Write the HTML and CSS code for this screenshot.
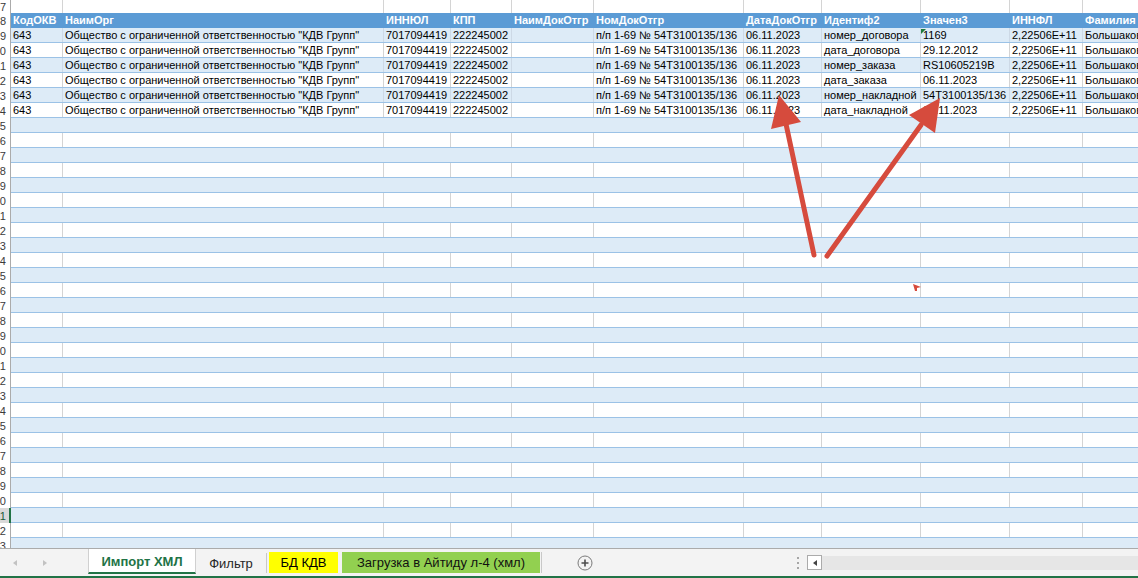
FILE: index.html
```html
<!DOCTYPE html>
<html lang="ru">
<head>
<meta charset="utf-8">
<title>Импорт ХМЛ</title>
<link rel="stylesheet" href="styles.css">
</head>
<body>
<div class="app">
  <div class="sheet">
    <div class="row top"><div class="rh">7</div><div class="cells"><i></i><i></i><i></i><i></i><i></i><i></i><i></i><i></i><i></i><i></i><i></i></div></div>
    <div class="row"><div class="rh">8</div><div class="cells hdr"><span>КодОКВ</span><span>НаимОрг</span><span>ИННЮЛ</span><span>КПП</span><span>НаимДокОтгр</span><span>НомДокОтгр</span><span>ДатаДокОтгр</span><span>Идентиф2</span><span>Значен3</span><span>ИННФЛ</span><span>Фамилия</span></div></div>
    <div class="row"><div class="rh">9</div><div class="cells data band"><span>643</span><span>Общество с ограниченной ответственностью "КДВ Групп"</span><span>7017094419</span><span>222245002</span><span></span><span>п/п 1-69 № 54Т3100135/136</span><span>06.11.2023</span><span>номер_договора</span><span class="flag">1169</span><span>2,22506E+11</span><span>Большаков</span></div></div>
    <div class="row"><div class="rh">10</div><div class="cells data"><span>643</span><span>Общество с ограниченной ответственностью "КДВ Групп"</span><span>7017094419</span><span>222245002</span><span></span><span>п/п 1-69 № 54Т3100135/136</span><span>06.11.2023</span><span>дата_договора</span><span>29.12.2012</span><span>2,22506E+11</span><span>Большаков</span></div></div>
    <div class="row"><div class="rh">11</div><div class="cells data band"><span>643</span><span>Общество с ограниченной ответственностью "КДВ Групп"</span><span>7017094419</span><span>222245002</span><span></span><span>п/п 1-69 № 54Т3100135/136</span><span>06.11.2023</span><span>номер_заказа</span><span>RS10605219B</span><span>2,22506E+11</span><span>Большаков</span></div></div>
    <div class="row"><div class="rh">12</div><div class="cells data"><span>643</span><span>Общество с ограниченной ответственностью "КДВ Групп"</span><span>7017094419</span><span>222245002</span><span></span><span>п/п 1-69 № 54Т3100135/136</span><span>06.11.2023</span><span>дата_заказа</span><span>06.11.2023</span><span>2,22506E+11</span><span>Большаков</span></div></div>
    <div class="row"><div class="rh">13</div><div class="cells data band"><span>643</span><span>Общество с ограниченной ответственностью "КДВ Групп"</span><span>7017094419</span><span>222245002</span><span></span><span>п/п 1-69 № 54Т3100135/136</span><span>06.11.2023</span><span>номер_накладной</span><span>54Т3100135/136</span><span>2,22506E+11</span><span>Большаков</span></div></div>
    <div class="row"><div class="rh">14</div><div class="cells data"><span>643</span><span>Общество с ограниченной ответственностью "КДВ Групп"</span><span>7017094419</span><span>222245002</span><span></span><span>п/п 1-69 № 54Т3100135/136</span><span>06.11.2023</span><span>дата_накладной</span><span>06.11.2023</span><span>2,22506E+11</span><span>Большаков</span></div></div>
    <div class="row"><div class="rh">15</div><div class="cells blank band"></div></div>
    <div class="row"><div class="rh">16</div><div class="cells"><i></i><i></i><i></i><i></i><i></i><i></i><i></i><i></i><i></i><i></i><i></i></div></div>
    <div class="row"><div class="rh">17</div><div class="cells blank band"></div></div>
    <div class="row"><div class="rh">18</div><div class="cells"><i></i><i></i><i></i><i></i><i></i><i></i><i></i><i></i><i></i><i></i><i></i></div></div>
    <div class="row"><div class="rh">19</div><div class="cells blank band"></div></div>
    <div class="row"><div class="rh">20</div><div class="cells"><i></i><i></i><i></i><i></i><i></i><i></i><i></i><i></i><i></i><i></i><i></i></div></div>
    <div class="row"><div class="rh">21</div><div class="cells blank band"></div></div>
    <div class="row"><div class="rh">22</div><div class="cells"><i></i><i></i><i></i><i></i><i></i><i></i><i></i><i></i><i></i><i></i><i></i></div></div>
    <div class="row"><div class="rh">23</div><div class="cells blank band"></div></div>
    <div class="row"><div class="rh">24</div><div class="cells"><i></i><i></i><i></i><i></i><i></i><i></i><i></i><i></i><i></i><i></i><i></i></div></div>
    <div class="row"><div class="rh">25</div><div class="cells blank band"></div></div>
    <div class="row"><div class="rh">26</div><div class="cells"><i></i><i></i><i></i><i></i><i></i><i></i><i></i><i></i><i></i><i></i><i></i></div></div>
    <div class="row"><div class="rh">27</div><div class="cells blank band"></div></div>
    <div class="row"><div class="rh">28</div><div class="cells"><i></i><i></i><i></i><i></i><i></i><i></i><i></i><i></i><i></i><i></i><i></i></div></div>
    <div class="row"><div class="rh">29</div><div class="cells blank band"></div></div>
    <div class="row"><div class="rh">30</div><div class="cells"><i></i><i></i><i></i><i></i><i></i><i></i><i></i><i></i><i></i><i></i><i></i></div></div>
    <div class="row"><div class="rh">31</div><div class="cells blank band"></div></div>
    <div class="row"><div class="rh">32</div><div class="cells"><i></i><i></i><i></i><i></i><i></i><i></i><i></i><i></i><i></i><i></i><i></i></div></div>
    <div class="row"><div class="rh">33</div><div class="cells blank band"></div></div>
    <div class="row"><div class="rh">34</div><div class="cells"><i></i><i></i><i></i><i></i><i></i><i></i><i></i><i></i><i></i><i></i><i></i></div></div>
    <div class="row"><div class="rh">35</div><div class="cells blank band"></div></div>
    <div class="row"><div class="rh">36</div><div class="cells"><i></i><i></i><i></i><i></i><i></i><i></i><i></i><i></i><i></i><i></i><i></i></div></div>
    <div class="row"><div class="rh">37</div><div class="cells blank band"></div></div>
    <div class="row"><div class="rh">38</div><div class="cells"><i></i><i></i><i></i><i></i><i></i><i></i><i></i><i></i><i></i><i></i><i></i></div></div>
    <div class="row"><div class="rh">39</div><div class="cells blank band"></div></div>
    <div class="row"><div class="rh">40</div><div class="cells"><i></i><i></i><i></i><i></i><i></i><i></i><i></i><i></i><i></i><i></i><i></i></div></div>
    <div class="row"><div class="rh sel">41</div><div class="cells blank band"></div></div>
    <div class="row"><div class="rh">42</div><div class="cells"><i></i><i></i><i></i><i></i><i></i><i></i><i></i><i></i><i></i><i></i><i></i></div></div>
    <div class="row"><div class="rh">43</div><div class="cells blank band"></div></div>
  </div>

  <div class="tabbar">
    <div class="nav">
      <span class="tri left"></span>
      <span class="tri right"></span>
    </div>
    <div class="tabs">
      <div class="tab active">Импорт ХМЛ</div>
      <div class="tab plain">Фильтр</div>
      <div class="tab yellow">БД КДВ</div>
      <div class="tab green">Загрузка в Айтиду л-4 (хмл)</div>
    </div>
    <div class="add">
      <svg width="16" height="16" viewBox="0 0 16 16"><circle cx="8" cy="8" r="7" fill="none" stroke="#7a7a7a" stroke-width="1"/><path d="M8 4.5v7M4.5 8h7" stroke="#4d4d4d" stroke-width="1.6"/></svg>
    </div>
    <div class="dots"><b></b><b></b><b></b></div>
    <div class="scroll">
      <div class="sbtn"><span class="stri"></span></div>
      <div class="track"></div>
    </div>
  </div>

  <svg class="overlay" width="1138" height="578" viewBox="0 0 1138 578">
    <polygon points="921,29 926,29 921,34" fill="#1e7a3c"/>
    <g stroke="#d64b3d" stroke-width="5" stroke-linecap="round" fill="none">
      <line x1="814" y1="255" x2="786" y2="124"/>
      <line x1="827" y1="256" x2="921" y2="125"/>
    </g>
    <g fill="#d64b3d">
      <polygon points="779,95 801,122 771,129"/>
      <polygon points="940,98 935,133 909,115"/>
      <polygon points="913,284 921,287 917,288 917,291 915,291"/>
    </g>
  </svg>
</div>
</body>
</html>
```

FILE: styles.css
```css
* { box-sizing: border-box; margin: 0; padding: 0; }
html, body { width: 1138px; height: 578px; overflow: hidden; background: #fff; }
body { font-family: "Liberation Sans", Arial, sans-serif; font-size: 11px; color: #000; }

.app { position: relative; width: 1138px; height: 578px; display: flex; flex-direction: column; }

.sheet { height: 548px; overflow: hidden; display: flex; flex-direction: column; flex: none; }

.row { display: flex; height: 15px; flex: none; }
.row.top { height: 13px; }

.rh {
  width: 11px; flex: none;
  border-right: 1px solid #ababab;
  display: flex; justify-content: flex-end; align-items: center;
  overflow: hidden; white-space: nowrap;
  padding-right: 4px;
  color: #3a3a3a; font-size: 11px; line-height: 14px;
  background: #fff;
}
.rh.sel { background: #d9d9d9; border-right: 2px solid #217346; color: #1d5c38; padding-right: 3px; }

.cells {
  flex: 1; display: grid;
  grid-template-columns: 52px 321px 67px 61px 82px 150px 78px 99px 89px 73px 140px;
  border-bottom: 1px solid #9bc2e6;
  overflow: hidden;
}
.row.top .cells { border-bottom: none; }
.cells i { border-right: 1px solid #d4d4d4; display: block; }

.cells.band { background: #ddebf7; }

.cells.hdr { background: #5b9bd5; border-bottom-color: #5b9bd5; }
.cells.hdr span {
  color: #fff; font-weight: bold; padding-left: 2px; line-height: 14px;
  white-space: nowrap; overflow: hidden;
}

.cells.data span {
  padding-left: 2px; line-height: 14px; white-space: nowrap; overflow: hidden;
  border-right: 1px solid #d4d4d4;
}
.cells.data.band span { border-right-color: #cdd9e6; }

/* tab bar */
.tabbar {
  height: 30px; flex: none;
  background: #f3f3f3;
  border-top: 1px solid #ababab;
  border-bottom: 2px solid #217346;
  display: flex; align-items: stretch;
  font-size: 13px;
}
.nav { width: 88px; display: flex; align-items: center; padding-left: 13px; gap: 26px; }
.tri { width: 0; height: 0; border-top: 3.5px solid transparent; border-bottom: 3.5px solid transparent; }
.tri.left { border-right: 4px solid #c2c2c2; }
.tri.right { border-left: 4px solid #c2c2c2; }

.tabs { display: flex; align-items: stretch; width: 454px; border-right: 1px solid #c8c8c8; margin: 3px 0 3px; }
.tab { display: flex; align-items: center; justify-content: center; white-space: nowrap; color: #262626; }
.tab.active {
  width: 108px; margin: -3px 0 -1px;
  background: #fff; color: #217346; font-weight: bold;
  border-left: 1px solid #d0d0d0; border-right: 1px solid #d0d0d0;
  border-bottom: 2px solid #217346;
  padding-top: 1px;
}
.tab.plain { width: 71px; border-right: 1px solid #c8c8c8; margin: 1px 0 0; }
.tab.yellow { width: 69px; margin-left: 2px; background: #ffff00; color: #000; }
.tab.green { width: 198px; margin-left: 4px; background: #92d050; color: #111; }

.add { width: 90px; display: flex; align-items: center; padding-left: 35px; }

.dots { width: 10px; margin-left: 161px; display: flex; flex-direction: column; justify-content: center; gap: 3px; align-items: center; }
.dots b { width: 2px; height: 2px; background: #a6a6a6; display: block; }

.scroll { flex: 1; display: flex; align-items: center; margin-left: 4px; }
.sbtn {
  width: 15px; height: 15px; background: #fff; border: 1px solid #ababab;
  display: flex; align-items: center; justify-content: center; flex: none;
}
.stri { width: 0; height: 0; border-top: 3.5px solid transparent; border-bottom: 3.5px solid transparent; border-right: 4px solid #444; }
.track { flex: 1; height: 14px; background: #e6e6e6; }

.overlay { position: absolute; left: 0; top: 0; pointer-events: none; }
```
